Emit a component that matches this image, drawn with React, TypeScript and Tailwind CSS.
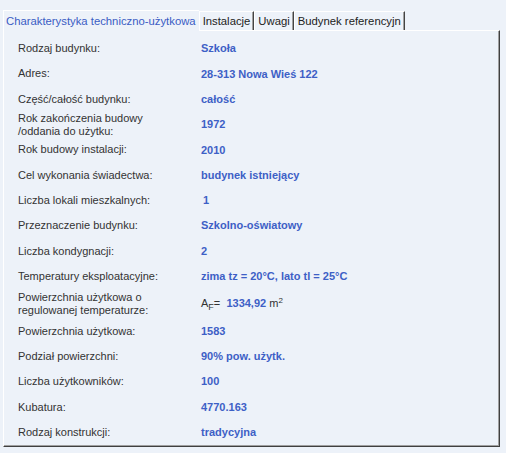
import React from 'react';

type Row = { label: React.ReactNode; value: React.ReactNode; tall?: boolean };

const rows: Row[] = [
  { label: 'Rodzaj budynku:', value: 'Szkoła' },
  { label: 'Adres:', value: '28-313 Nowa Wieś 122' },
  { label: 'Część/całość budynku:', value: 'całość' },
  { label: <>Rok zakończenia budowy<br />/oddania do użytku:</>, value: '1972' },
  { label: 'Rok budowy instalacji:', value: '2010' },
  { label: 'Cel wykonania świadectwa:', value: 'budynek istniejący' },
  { label: 'Liczba lokali mieszkalnych:', value: <span className="pl-[2px]">1</span> },
  { label: 'Przeznaczenie budynku:', value: 'Szkolno-oświatowy' },
  { label: 'Liczba kondygnacji:', value: '2' },
  { label: 'Temperatury eksploatacyjne:', value: 'zima tz = 20°C, lato tl = 25°C' },
  {
    label: <>Powierzchnia użytkowa o<br />regulowanej temperaturze:</>,
    value: (
      <span className="font-normal text-[#333] leading-[13px]">
        A<span className="text-[9px] relative top-[3px]">F</span>=&nbsp;{' '}
        <span className="font-bold text-[#3d60c6]">1334,92</span> m<span className="text-[8px] relative -top-[4px]">2</span>
      </span>
    ),
    tall: true,
  },
  { label: 'Powierzchnia użytkowa:', value: '1583' },
  { label: 'Podział powierzchni:', value: '90% pow. użytk.' },
  { label: 'Liczba użytkowników:', value: '100' },
  { label: 'Kubatura:', value: '4770.163' },
  { label: 'Rodzaj konstrukcji:', value: 'tradycyjna' },
];

const tabs = ['Instalacje', 'Uwagi', 'Budynek referencyjn'];

export default function App() {
  return (
    <div className="w-[506px] h-[453px] bg-[#edf2f9] pt-[9px] pl-[3px] font-['Liberation_Sans',Arial,sans-serif] overflow-hidden">
      {/* tabs */}
      <div className="flex items-end h-[21px]">
        <div className="h-[21px] pl-[2px] pr-[3px] border-l border-t border-white bg-[#edf2f9] text-[11.3px] leading-[20px] text-[#3a5cc4] relative z-10 -mb-px">
          Charakterystyka techniczno-użytkowa
        </div>
        {tabs.map((t) => (
          <div
            key={t}
            className="h-[19px] px-[3px] border-l border-t border-white border-r border-r-[#444] shadow-[inset_-1px_0_0_#a0a0a0] text-[11.3px] leading-[18px] text-[#222]"
          >
            {t}
          </div>
        ))}
      </div>

      {/* panel */}
      <div className="w-[497px] h-[417px] border-l border-t border-white border-r border-b border-r-[#404040] border-b-[#404040] shadow-[inset_-1px_-1px_0_#a0a0a0] pt-[5px] pl-[14px]">
        {rows.map((r, i) => (
          <div key={i} className={`flex items-center ${r.tall ? 'h-[29.5px]' : 'h-[25.3px]'}`}>
            <div className="w-[183px] text-[11px] leading-[13px] text-[#333]">{r.label}</div>
            <div className="text-[11px] font-bold text-[#3d60c6]">{r.value}</div>
          </div>
        ))}
      </div>
    </div>
  );
}
